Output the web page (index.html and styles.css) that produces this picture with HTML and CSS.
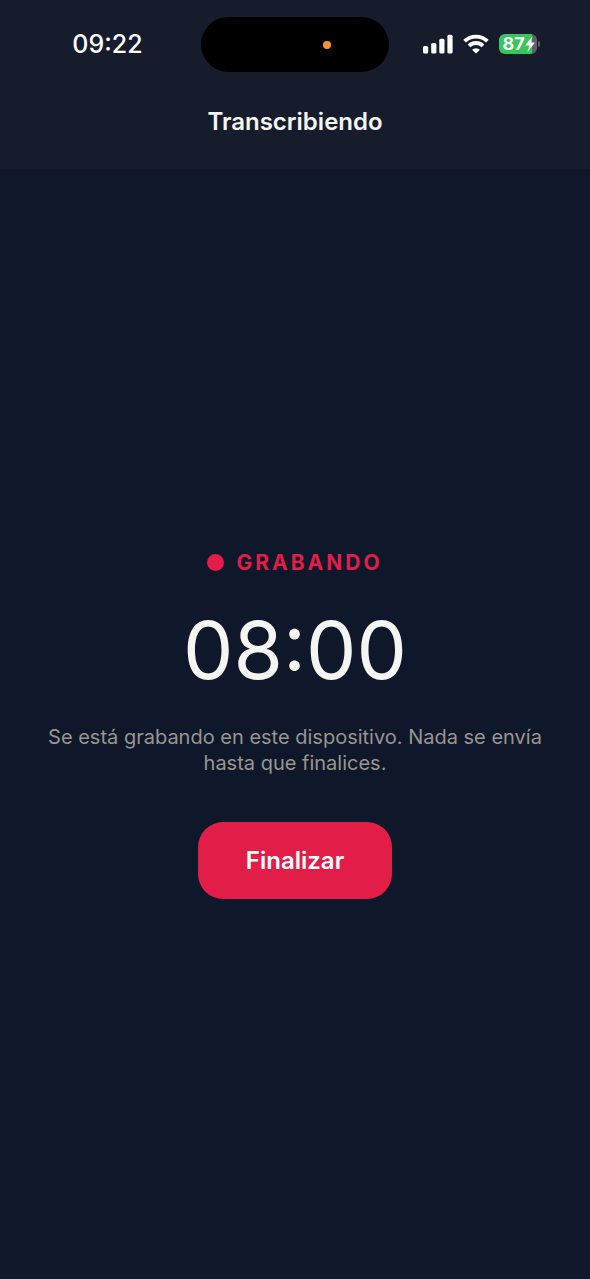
FILE: index.html
```html
<!DOCTYPE html>
<html lang="es">
<head>
  <meta charset="UTF-8" />
  <title>Transcribiendo</title>
  <meta name="viewport" content="width=device-width, initial-scale=1" />
  <link rel="stylesheet" href="styles.css">
</head>
<body>
  <header class="header">
    <div class="status-bar">
      <time class="clock">09:22</time>
      <div class="island"><span class="mic-dot"></span></div>
      <div class="indicators">
        <svg width="30" height="20" viewBox="0 0 30 20" fill="#fff" aria-hidden="true">
          <rect x="0" y="12" width="5.2" height="7.4" rx="1.5" />
          <rect x="8.2" y="9" width="5.2" height="10.4" rx="1.5" />
          <rect x="16.3" y="4.8" width="5.2" height="14.6" rx="1.5" />
          <rect x="24.4" y="0.8" width="5.2" height="18.6" rx="1.5" />
        </svg>
        <svg width="26" height="20" viewBox="0 0 26 20" aria-hidden="true">
          <path d="M1.6 7.2a16.4 16.4 0 0 1 22.8 0M6 11.8a10.2 10.2 0 0 1 14 0" fill="none" stroke="#fff" stroke-width="3.8" />
          <path d="M13 19.6l-3.9-3.9a5.7 5.7 0 0 1 7.8 0z" fill="#fff" />
        </svg>
        <div class="battery">
          <span class="battery-level">87</span>
          <svg class="bolt" width="10" height="16" viewBox="0 0 10 16" aria-hidden="true">
            <path d="M7 .8L.7 8.7c-.3.4-.1.7.3.7h3.3L2.7 15c-.1.5.2.6.5.3l6.2-8c.3-.4.1-.7-.3-.7H5.9L7.5 1.1c.1-.5-.2-.6-.5-.3z" fill="#fff" />
          </svg>
        </div>
      </div>
    </div>
    <h1 class="title">Transcribiendo</h1>
  </header>

  <main class="recorder">
    <div class="recording"><span class="rec-dot"></span>GRABANDO</div>
    <div class="timer" role="timer">08:00</div>
    <p class="hint">Se está grabando en este dispositivo. Nada se envía hasta que finalices.</p>
    <button type="button" class="btn">Finalizar</button>
  </main>
</body>
</html>
```
FILE: styles.css
```css
* {
  box-sizing: border-box;
}
body {
  margin: 0;
  min-height: 100vh;
  display: flex;
  flex-direction: column;
  font-family: Inter, sans-serif;
  background: #0f172a;
  color: #f5f5f4;
}
.header {
  padding: 17px 0 31px;
  background: #171c2c;
}
.status-bar {
  display: grid;
  grid-template-columns: 1fr 188px 1fr;
  align-items: center;
  color: #fff;
}
.clock {
  padding: 0 0 2px 14px;
  font-size: 25px;
  font-weight: 500;
  text-align: center;
}
.island {
  display: flex;
  align-items: center;
  justify-content: flex-end;
  height: 55px;
  padding-right: 58px;
  border-radius: 28px;
  background: #000;
}
.mic-dot {
  width: 8px;
  height: 8px;
  border-radius: 50%;
  background: #ff9230;
}
.indicators {
  display: flex;
  align-items: center;
  justify-content: center;
  gap: 10px;
  padding: 0 20px 2px 0;
}
.battery {
  position: relative;
  display: flex;
  align-items: center;
  width: 38px;
  height: 20px;
  padding-left: 4px;
  border-radius: 6px;
  background: linear-gradient(90deg, #34c759 87%, #5d606b 87%);
}
.battery::after {
  content: "";
  position: absolute;
  left: 39px;
  top: 7px;
  width: 2px;
  height: 6px;
  border-radius: 0 2px 2px 0;
  background: #5d606b;
}
.battery-level {
  font-size: 18px;
  line-height: 20px;
  font-weight: 700;
}
.bolt {
  flex: none;
}
.title {
  margin: 34px 0 0;
  font-size: 24px;
  line-height: 32px;
  font-weight: 600;
  text-align: center;
}
.recorder {
  flex: 1;
  display: flex;
  flex-direction: column;
  align-items: center;
  justify-content: center;
  padding: 0 36px;
}
.recording {
  display: flex;
  align-items: center;
  gap: 12px;
  font-size: 21px;
  line-height: 26px;
  font-weight: 700;
  letter-spacing: 3px;
  color: #e11d48;
}
.rec-dot {
  width: 17px;
  height: 17px;
  border-radius: 50%;
  background: #e11d48;
}
.timer {
  margin: 24px 0;
  font-size: 80px;
  line-height: 100px;
}
.hint {
  margin: 0;
  font-size: 20px;
  line-height: 26px;
  text-align: center;
  color: #98968f;
}
.btn {
  margin-top: 46px;
  padding: 24px 48px;
  border: none;
  border-radius: 25px;
  background: #e11d48;
  color: #fff;
  font-family: inherit;
  font-size: 24px;
  line-height: 29px;
  font-weight: 600;
  cursor: pointer;
}
```
